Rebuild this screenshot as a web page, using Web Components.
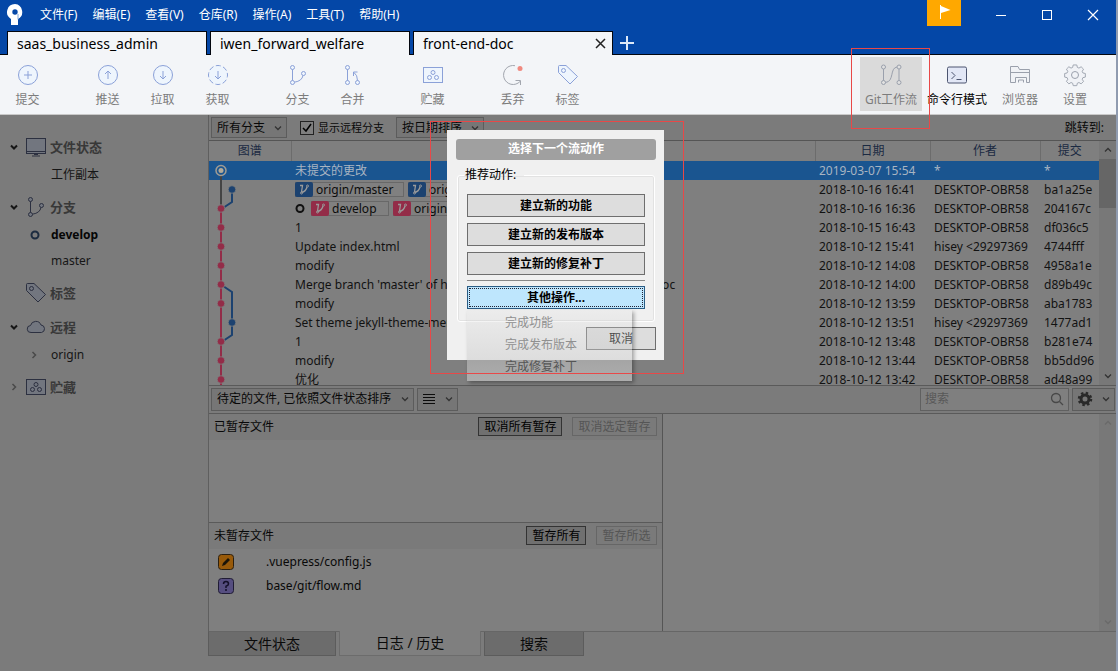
<!DOCTYPE html>
<html lang="zh-CN">
<head>
<meta charset="utf-8">
<title>front-end-doc</title>
<style>
html, body { height: 100%; margin: 0; }
body { font: 12px/16px "Noto Sans", "Noto Sans CJK SC", sans-serif; color: #0c0c0c; background: #7b7b7b; overflow: hidden; }
</style>
</head>
<body>
<app-window></app-window>
<script>
const RESET = `
*, *::before, *::after { box-sizing: border-box; }
button, input, select { font: inherit; color: inherit; margin: 0; padding: 0; border: 0; border-radius: 0; background: none; outline: none; }
button { cursor: pointer; }
svg { display: block; }
`;
function define(name, css, html) {
  const template = document.createElement('template');
  const make = typeof html === 'function' ? html : () => html;
  customElements.define(name, class extends HTMLElement {
    constructor() { super(); this.attachShadow({ mode: 'open' }); }
    connectedCallback() {
      if (this.shadowRoot.childNodes.length) return;
      template.innerHTML = `<style>${RESET}${css}</style>${make(this)}`;
      this.shadowRoot.append(template.content.cloneNode(true));
    }
  });
}

/* Icons */
const STASH = '<rect x="5.5" y="7.5" width="19" height="15"/><circle cx="15" cy="12.5" r="2"/><circle cx="11.5" cy="17.5" r="2"/><circle cx="18.5" cy="17.5" r="2"/>';
const TAG = '<path d="M5.5 6.5q0-1 1-1h6.5l11.5 11-7.5 7.5L5.5 12.5z"/><circle cx="10.5" cy="10.5" r="2"/>';
const BRANCH = '<circle cx="9.5" cy="7.5" r="2"/><circle cx="9.5" cy="22.5" r="2"/><circle cx="20.5" cy="13.5" r="2"/><path d="M9.5 9.5v11M11.5 22.2q7.5-1.2 8.5-6.7" fill="none"/>';
const ICONS = {
  commit: '<circle cx="15" cy="15" r="9.5"/><path d="M15 11v8M11 15h8"/>',
  push: '<circle cx="15" cy="15" r="9.5"/><path d="M15 19v-8M12 14l3-3 3 3" fill="none"/>',
  pull: '<circle cx="15" cy="15" r="9.5"/><path d="M15 11v8M12 16l3 3 3-3" fill="none"/>',
  fetch: '<circle cx="15" cy="15" r="9.5" stroke-dasharray="5 2.46" stroke-dashoffset="2.5"/><path d="M15 11v8M12 16l3 3 3-3" fill="none"/>',
  branch: BRANCH,
  merge: '<circle cx="9.5" cy="7.5" r="2"/><circle cx="9.5" cy="22.5" r="2"/><circle cx="19.5" cy="22.5" r="2"/><path d="M9.5 9.5v11M19.5 20.5Q19.5 15 16 12.5M15.5 16v-4h4" fill="none"/>',
  stash: STASH,
  discard: '<path d="M17 5.7a9.5 9.5 0 1 0 5 15.8M22.5 25v-4.5h-5" fill="none" stroke="#a2a6ae"/><circle cx="22" cy="8.5" r="2.5" fill="#f08a80" stroke="none"/>',
  tag: TAG,
  flow: '<circle cx="7.5" cy="7" r="2"/><circle cx="7.5" cy="22.5" r="2"/><circle cx="23" cy="7" r="2"/><circle cx="23" cy="22.5" r="2"/><path d="M7.5 9v11.5M23 9v11.5M9.500 22.500c9-1 4-14.500 11.500-15.500" fill="none"/>',
  terminal: '<rect x="5.5" y="7" width="19" height="16" rx="1.5"/><path d="M9.500 12l3.500 3.500-3.500 3.500M14.500 19.500h5" fill="none"/>',
  explorer: '<path d="M5.500 22.500v-16h7.500l1.500 3h10v13h-3v-5h-11v5zM5.500 12.500h19M13.500 22.500v-2.500h5v2.500"/>',
  gear: '<path d="M13 5.500h4l.6 2.700 1.800.8 2.400-1.500 2.700 2.700-1.500 2.400.8 1.800 2.700.6v4l-2.700.6-.8 1.800 1.500 2.400-2.700 2.700-2.400-1.500-1.800.8-.6 2.700h-4l-.6-2.700-1.800-.8-2.400 1.500-2.700-2.700 1.500-2.400-.8-1.800-2.700-.6v-4l2.700-.6.8-1.800-1.500-2.400 2.700-2.700 2.400 1.500 1.800-.8z" transform="translate(1.500 0) scale(.9)"/><circle cx="15" cy="15" r="3.500"/>',
  monitor: '<rect x="5.5" y="6.5" width="19" height="15"/><path d="M5.500 19.500h19M11 24h8M13 22.500h4"/>',
  cloud: '<path d="M10 20.500a3.500 3.500 0 0 1-.5-7 5.500 5.500 0 0 1 10.500-.5 3.800 3.800 0 0 1 .5 7.500z"/>'
};
define('ui-icon', `
:host { display: block; width: 30px; height: 30px; flex: none; }
svg { width: 100%; height: 100%; fill: var(--icon-fill, #eef5fd); stroke: var(--icon-stroke, #8ba1d8); stroke-width: 1; }
`, el => `<svg viewBox="0 0 30 30" aria-hidden="true">${ICONS[el.getAttribute('name')]}</svg>`);

define('ui-chevron', `
:host { display: block; width: 10px; height: 10px; flex: none; color: #333; }
svg { fill: none; stroke: currentColor; stroke-width: var(--weight, 1.3); transform: rotate(var(--turn, 0deg)); }
`, '<svg viewBox="0 0 10 10" width="10" height="10" aria-hidden="true"><path d="M2 3.500l3 3 3-3"/></svg>');

/* Title bar */
define('title-bar', `
:host { display: flex; height: 31px; color: #fff; }
.logo { width: 40px; padding: 4px 0 0 6px; }
nav { display: flex; gap: 15px; height: 30px; align-items: center; flex: 1; white-space: nowrap; }
.flag { width: 34px; height: 26px; background: #ffa800; margin-right: 17px; }
.win { width: 46px; height: 30px; display: grid; place-items: center; }
`, `
<svg class="logo" viewBox="0 0 34 26" height="30" aria-hidden="true"><path d="M9 0a8 8 0 0 0-4 14.900V21h7v-6A8 8 0 0 0 9 0z" fill="#fff"/><circle cx="9" cy="8" r="2.700" fill="#0447a7"/><path d="M12 15.500V10" stroke="#7fa4d8" stroke-width="1"/></svg>
<nav>${['文件(F)', '编辑(E)', '查看(V)', '仓库(R)', '操作(A)', '工具(T)', '帮助(H)'].map(t => `<button>${t}</button>`).join('')}</nav>
<button class="flag" aria-label="通知"><svg width="34" height="26" viewBox="0 0 34 26"><path d="M13.500 5v14" stroke="#fff"/><path d="M14 6l9.500 4-9.500 3z" fill="#fff"/></svg></button>
<button class="win" aria-label="最小化"><svg width="12" height="12" stroke="#fff"><path d="M1 6.500h10"/></svg></button>
<button class="win" aria-label="最大化"><svg width="12" height="12" stroke="#fff" fill="none"><rect x="1.500" y="1.500" width="9" height="9"/></svg></button>
<button class="win" aria-label="关闭"><svg width="12" height="12" stroke="#fff" stroke-width="1.200"><path d="M1 1l10 10M11 1L1 11"/></svg></button>
`);

define('repo-tab', `
:host { display: flex; width: 200px; height: 24px; align-items: center; padding: 0 6px 0 9px; background: #f3f5f8; border: 1px solid #02060f; border-bottom: 0; font-size: 14px; line-height: 20px; color: #000; }
.name { flex: 1; text-align: left; }
svg { stroke: #222; stroke-width: 1.500; }
`, el => `<button class="name" role="tab"><slot></slot></button>${el.hasAttribute('active') ? '<button aria-label="关闭标签页"><svg width="11" height="11"><path d="M1 1l9 9M10 1l-9 9"/></svg></button>' : ''}`);
define('repo-tabs', `
:host { display: flex; gap: 3px; padding-left: 7px; height: 24px; border-bottom: 1px solid #02060f; }
[active] { margin-bottom: -1px; }
.add { padding: 0 4px; }
`, `
<repo-tab>saas_business_admin</repo-tab><repo-tab>iwen_forward_welfare</repo-tab><repo-tab active>front-end-doc</repo-tab>
<button class="add" aria-label="新建标签页"><svg width="14" height="14" stroke="#dce8f8" stroke-width="2"><path d="M0 7h14M7 0v14"/></svg></button>
`);

/* Tool bar */
define('tool-button', `
:host { display: block; min-width: 55px; color: #7c7c7c; }
button { display: flex; flex-direction: column; align-items: center; width: 100%; height: 54px; padding-top: 3px; white-space: nowrap; background: var(--face, none); line-height: 20px; }
`, el => `<button><ui-icon name="${el.getAttribute('icon')}"></ui-icon><span><slot></slot></span></button>`);
define('tool-bar', `
:host { display: flex; justify-content: space-between; height: 60px; padding-top: 2px; background: #f3f5f8; border-bottom: 1px solid #c9c9c9; }
.actions, .set { display: flex; }
.actions { gap: 25px; }
.tools { display: grid; grid-template-columns: 62px 70px 56px 54px; padding-right: 14px; }
.tools > * { min-width: 0; --icon-stroke: #9aa0ac; --icon-fill: #f0f2f6; }
.tools > .on { --face: #dadada; --icon-fill: #e0e0e0; }
.tools > .strong { color: #000; --icon-stroke: #4c5570; --icon-fill: #e2e7f6; }
`, `
<div class="actions">
  <div class="set"><tool-button icon="commit">提交</tool-button></div>
  <div class="set"><tool-button icon="push">推送</tool-button><tool-button icon="pull">拉取</tool-button><tool-button icon="fetch">获取</tool-button></div>
  <div class="set"><tool-button icon="branch">分支</tool-button><tool-button icon="merge">合并</tool-button></div>
  <div class="set"><tool-button icon="stash">贮藏</tool-button></div>
  <div class="set"><tool-button icon="discard">丢弃</tool-button><tool-button icon="tag">标签</tool-button></div>
</div>
<div class="tools">
  <tool-button class="on" icon="flow">Git工作流</tool-button><tool-button class="strong" icon="terminal">命令行模式</tool-button><tool-button icon="explorer">浏览器</tool-button><tool-button icon="gear">设置</tool-button>
</div>
`);

/* Side bar */
define('nav-head', `
:host { display: flex; height: 34px; padding: 4px 0 0 9px; align-items: center; color: #383838; font-weight: 700; font-size: 13px; --icon-stroke: #2c3040; --icon-fill: #72767f; }
.mark { width: 12px; }
ui-chevron { color: #161616; --weight: 2; }
:host([closed]) ui-chevron { --turn: -90deg; color: #4a4a4a; --weight: 1.5; }
ui-icon { margin-right: -1px; }
`, el => `<span class="mark">${el.hasAttribute('leaf') ? '' : '<ui-chevron></ui-chevron>'}</span><ui-icon name="${el.getAttribute('icon')}"></ui-icon><span><slot></slot></span>`);
define('nav-item', `
:host { display: flex; height: 26px; align-items: center; padding-left: 29px; color: #161616; }
.mark { width: 22px; }
ui-chevron { --turn: -90deg; color: #4a4a4a; --weight: 1.5; }
:host([current]) { font-weight: 700; color: #060606; }
a { color: inherit; text-decoration: none; }
`, el => `<span class="mark">${el.hasAttribute('current') ? '<svg width="12" height="12" fill="none" stroke="#1c2c40" stroke-width="2"><circle cx="6" cy="6" r="3.500"/></svg>' : el.hasAttribute('closed') ? '<ui-chevron></ui-chevron>' : ''}</span><a href="#"><slot></slot></a>`);
define('side-bar', `
:host { display: block; width: 208px; flex: none; padding-top: 13px; background: #7b7b7b; }
`, `
<nav-head icon="monitor">文件状态</nav-head><nav-item>工作副本</nav-item>
<nav-head icon="branch">分支</nav-head><nav-item current>develop</nav-item><nav-item>master</nav-item>
<nav-head icon="tag" leaf>标签</nav-head>
<nav-head icon="cloud">远程</nav-head><nav-item closed>origin</nav-item>
<nav-head icon="stash" closed>贮藏</nav-head>
`);

/* Controls */
define('drop-down', `
:host { display: grid; align-items: center; height: 21px; border: 1px solid #5c5c5c; background: #767676; color: #080808; }
select, ui-chevron { grid-area: 1 / 1; }
select { appearance: none; width: 100%; height: 100%; padding-left: 5px; }
ui-chevron { justify-self: end; margin-right: 3px; pointer-events: none; }
`, el => `<select aria-label="${el.getAttribute('label')}"><option>${el.getAttribute('value')}</option></select><ui-chevron></ui-chevron>`);
define('filter-bar', `
:host { display: flex; align-items: center; height: 25px; padding: 0 12px 0 2px; background: #7b7b7b; color: #080808; }
.branches { width: 76px; margin-right: 13px; }
.order { width: 88px; margin-left: 12px; }
label { display: flex; align-items: center; font-size: 11px; }
input { appearance: none; width: 14px; height: 14px; margin-right: 4px; border: 1px solid #222; background: #7f7f7f url('data:image/svg+xml,<svg xmlns="http://www.w3.org/2000/svg" viewBox="0 0 12 12"><path d="M2 6l3 3 5-7" fill="none" stroke="black" stroke-width="1.500"/></svg>'); }
.jump { margin-left: auto; }
`, `
<drop-down class="branches" label="分支" value="所有分支"></drop-down>
<label><input type="checkbox" checked>显示远程分支</label>
<drop-down class="order" label="排序" value="按日期排序"></drop-down>
<span class="jump">跳转到:</span>
`);

/* Commit log */
const RED = '#932c48', BLUE = '#1c4270';
const line = (d, c) => `<path d="${d}" stroke="${c}" stroke-width="2" fill="none"/>`;
const dot = (x, c) => `<circle cx="${x}" cy="9.5" r="3.8" fill="${c}" stroke="#7f7f7f" stroke-width=".8"/>`;
const GRAPH = {
  head: line('M12 9v10', '#444') + '<circle cx="12" cy="9.500" r="5" fill="#1a5590" stroke="#a09c94" stroke-width="1.500"/><circle cx="12" cy="9.500" r="2.500" fill="#b4aa98"/>',
  side: line('M12 0v19', '#444') + line('M23 9v10', BLUE) + dot(23, BLUE),
  join: line('M12 0v9', '#444') + line('M12 9v10', RED) + line('M23 0v3l-9 6', BLUE) + dot(12, RED),
  plain: line('M12 0v19', RED) + dot(12, RED),
  fork: line('M12 0v19', RED) + line('M14 11l9 6v2', BLUE) + dot(12, RED),
  both: line('M12 0v19', RED) + line('M23 0v19', BLUE) + dot(12, RED),
  second: line('M12 0v19', RED) + line('M23 0v19', BLUE) + dot(23, BLUE),
  close: line('M12 0v19', RED) + line('M23 0v3l-9 6', BLUE) + dot(12, RED)
};
define('ref-badge', `
:host { display: inline-flex; align-items: center; flex: none; width: var(--w); height: 15px; border: 1px solid #686868; background: #808080; color: #0c0c0c; line-height: 13px; }
svg { margin: -1px 3px -1px -1px; background: var(--tint); border-radius: 2px; }
`, '<svg width="18" height="15" fill="none" stroke="#9a9a9a" aria-hidden="true"><path d="M5 3.500h2.500L6.500 10M6.500 10.500q4.500-1 5.500-5.500" stroke-width="1.300"/><circle cx="6.500" cy="11" r="1"/><circle cx="12.500" cy="4" r="1"/></svg><span><slot></slot></span>');
const D = 'DESKTOP-OBR58';
const COMMITS = [
  ['head', '未提交的更改', '2019-03-07 15:54', '*', '*'],
  ['side', `<ref-badge style="--w:109px;--tint:${BLUE}">origin/master</ref-badge><ref-badge style="--w:100px;--tint:${BLUE}">origin/HEAD</ref-badge>`, '2018-10-16 16:41', D, 'ba1a25e'],
  ['join', `<svg class="here" width="11" height="11" fill="none" stroke="#111" stroke-width="2"><circle cx="5" cy="5.500" r="3.500"/></svg><ref-badge style="--w:78px;--tint:${RED}">develop</ref-badge><ref-badge style="--w:109px;--tint:${RED}">origin/develop</ref-badge>`, '2018-10-16 16:36', D, '204167c'],
  ['plain', '1', '2018-10-15 16:43', D, 'df036c5'],
  ['plain', 'Update index.html', '2018-10-12 15:41', 'hisey &lt;29297369', '4744fff'],
  ['plain', 'modify', '2018-10-12 14:08', D, '4958a1e'],
  ['fork', "Merge branch 'master' of https://github.com/hisey29/front-end-doc", '2018-10-12 14:00', D, 'd89b49c'],
  ['both', 'modify', '2018-10-12 13:59', D, 'aba1783'],
  ['second', 'Set theme jekyll-theme-merlot', '2018-10-12 13:51', 'hisey &lt;29297369', '1477ad1'],
  ['close', '1', '2018-10-12 13:48', D, 'b281e74'],
  ['plain', 'modify', '2018-10-12 13:44', D, 'bb5dd96'],
  ['plain', '优化', '2018-10-12 13:42', D, 'ad48a99']
];
define('scroll-track', `
:host { display: flex; flex-direction: column; align-items: center; width: 17px; flex: none; padding: 4px 0; background: #787878; }
.thumb { width: 17px; height: 49px; margin-top: 4px; background: #666; }
.up { --turn: 180deg; }
.down { margin-top: auto; }
:host([idle]) ui-chevron { color: #6a6a6a; }
`, el => `<ui-chevron class="up"></ui-chevron>${el.hasAttribute('idle') ? '' : '<div class="thumb"></div>'}<ui-chevron class="down"></ui-chevron>`);
define('commit-log', `
:host { display: flex; min-height: 0; overflow: hidden; border-top: 1px solid #555; background: #7f7f7f; }
.view { flex: 1; min-width: 0; overflow: hidden; }
table { width: 100%; border-collapse: collapse; table-layout: fixed; color: #121212; }
th { height: 20px; padding: 0; font-weight: 400; color: #1b2a42; border-right: 1px solid #6c6c6c; }
th:last-child { border-right: 0; }
td { height: 19px; padding: 0 4px; line-height: 19px; }
td:first-child { padding: 0; }
td > div { display: flex; align-items: center; gap: 4px; height: 19px; overflow: hidden; white-space: nowrap; }
.selected { background: #1a5590; color: #a8b4c2; }
.here { flex: none; margin-right: 1px; }
`, `
<div class="view"><table>
<colgroup><col style="width:82px"><col><col style="width:115px"><col style="width:110px"><col style="width:59px"></colgroup>
<thead><tr><th>图谱</th><th aria-label="描述"></th><th>日期</th><th>作者</th><th>提交</th></tr></thead>
<tbody>${COMMITS.map(([g, ...cells], i) => `<tr${i ? '' : ' class="selected"'}><td><svg width="40" height="19">${GRAPH[g]}</svg></td>${cells.map(c => `<td><div>${c}</div></td>`).join('')}</tr>`).join('')}</tbody>
</table></div><scroll-track></scroll-track>
`);

/* Working-copy panes */
define('pending-bar', `
:host { display: flex; align-items: center; gap: 3px; height: 29px; padding: 0 1px 0 2px; background: #7b7b7b; border: solid #5a5a5a; border-width: 1px 0; }
drop-down { height: 23px; }
.files { width: 203px; }
.list, .gear { display: flex; align-items: center; justify-content: space-between; height: 23px; border: 1px solid #5c5c5c; background: #767676; }
.list { width: 41px; padding: 0 3px 0 5px; }
.gear { width: 43px; padding: 0 3px 0 4px; }
.search { display: flex; align-items: center; width: 149px; height: 23px; margin-left: auto; padding: 0 4px; border: 1px solid #606060; background: #7f7f7f; }
input { flex: 1; min-width: 0; }
input::placeholder { color: #585858; opacity: 1; }
`, `
<drop-down class="files" label="文件排序" value="待定的文件, 已依照文件状态排序"></drop-down>
<button class="list" aria-label="列表视图"><svg width="12" height="12" stroke="#0c0c0c"><path d="M0 1.500h12M0 4.500h12M0 7.500h12M0 10.500h12"/></svg><ui-chevron></ui-chevron></button>
<label class="search"><input type="search" aria-label="搜索" placeholder="搜索"><svg width="14" height="14" fill="none" stroke="#484848" stroke-width="1.300"><circle cx="6" cy="6" r="4.500"/><path d="M9.500 9.500L13 13"/></svg></label>
<button class="gear" aria-label="选项"><svg width="16" height="16" viewBox="0 0 16 16"><circle cx="8" cy="8" r="4" fill="none" stroke="#2a2a2a" stroke-width="3"/><circle cx="8" cy="8" r="6" fill="none" stroke="#2a2a2a" stroke-width="2.500" stroke-dasharray="2.400 2.312"/></svg><ui-chevron></ui-chevron></button>
`);
define('stage-pane', `
:host { display: flex; flex-direction: column; flex: 1; min-height: 0; background: #7f7f7f; }
header { display: flex; align-items: center; gap: 10px; height: 26px; padding: 0 5px; background: #7a7a7a; color: #080808; }
h2 { flex: 1; margin: 0; font: inherit; }
button { height: 19px; padding: 0 5px; line-height: 16px; border: 1px solid #333; background: #707070; color: #000; }
button:disabled { border-color: #666; background: #7a7a7a; color: #555; }
`, el => `<header><h2>${el.getAttribute('heading')}</h2><button>${el.getAttribute('all')}</button><button disabled>${el.getAttribute('some')}</button></header><slot></slot>`);
define('file-row', `
:host { display: flex; align-items: center; height: 24px; padding-left: 9px; color: #080808; }
svg { margin-right: 32px; }
`, el => `<svg width="16" height="16" viewBox="0 0 16 16" aria-hidden="true">${el.getAttribute('kind') === 'edit'
  ? '<rect x=".5" y=".5" width="15" height="15" rx="3" fill="#985a0a" stroke="#2c2010"/><path d="M4 12l1-3 5-5 2 2-5 5z" fill="#1a1408"/>'
  : '<rect x=".5" y=".5" width="15" height="15" rx="3" fill="#564e80" stroke="#201c34"/><path d="M5.500 6q0-2.500 2.500-2.500T10.500 6Q10.500 7.500 8 8.200V10" fill="none" stroke="#14102a" stroke-width="1.500"/><circle cx="8" cy="12" r="1" fill="#14102a"/>'}</svg><slot></slot>`);
define('work-area', `
:host { display: flex; min-height: 0; border-bottom: 1px solid #666; }
.files { display: flex; flex-direction: column; width: 50%; border-right: 1px solid #555; }
stage-pane + stage-pane { border-top: 1px solid #5a5a5a; }
.rows { padding-top: 1px; }
.diff { display: flex; flex: 1; justify-content: flex-end; background: #7f7f7f; }
`, `
<div class="files">
<stage-pane heading="已暂存文件" all="取消所有暂存" some="取消选定暂存"></stage-pane>
<stage-pane heading="未暂存文件" all="暂存所有" some="暂存所选"><div class="rows"><file-row kind="edit">.vuepress/config.js</file-row><file-row kind="new">base/git/flow.md</file-row></div></stage-pane>
</div>
<div class="diff"><scroll-track idle></scroll-track></div>
`);
define('view-tabs', `
:host { display: flex; gap: 3px; height: 39px; align-items: flex-start; background: #7b7b7b; font-size: 14px; color: #0a0a0a; }
button { height: 24px; border: 1px solid #5c5c5c; border-top: 0; background: #6c6c6c; }
.on { background: #7f7f7f; border-color: #6c6c6c; margin-top: -1px; height: 25px; }
`, `<button style="width:128px">文件状态</button><button class="on" style="width:142px">日志 / 历史</button><button style="width:100px">搜索</button>`);

/* Flow dialog with its open menu */
define('flow-dialog', `
:host { display: block; width: 217px; height: 230px; padding: 9px 8px 9px 9px; background: #f0f0f0; color: #000; }
h1 { margin: 0 0 7px; height: 21px; border-radius: 3px; background: #a0a0a0; color: #fff; font: inherit; font-weight: 700; line-height: 20px; text-align: center; }
fieldset { display: flex; flex-direction: column; gap: 6px; margin: 0 1px 5px; padding: 19px 9px 12px; border: 1px solid #fff; border-radius: 3px; box-shadow: inset 0 0 0 1px #e2e2e2; }
legend { margin-left: -3px; padding: 0 8px 0 1px; height: 16px; margin-bottom: -8px; }
hr { width: 100%; margin: -1px 0; border: 0; border-top: 1px solid #888; }
button { height: 23px; line-height: 20px; border: 1px solid #6e6e6e; background: #ddd; font-weight: 700; color: #000; }
.focus { border: 1px solid #2a5c84; background: #bee6fd; outline: 1px dotted #223; outline-offset: -3px; }
.cancel { display: block; width: 70px; margin-left: auto; font-weight: 400; }
`, `
<h1>选择下一个流动作</h1>
<fieldset><legend>推荐动作:</legend><button>建立新的功能</button><button>建立新的发布版本</button><button>建立新的修复补丁</button><hr><button class="focus">其他操作...</button></fieldset>
<button class="cancel">取消</button>
`);
define('fade-menu', `
:host { display: block; width: 165px; height: 71px; padding-top: 2px; background: linear-gradient(#dcdcdc33, #c8c8c8a0); box-shadow: 2px 2px 4px #0005; color: #909090; }
button { display: block; width: 100%; height: 22px; padding-left: 38px; text-align: left; }
.last { color: #555; }
`, '<button>完成功能</button><button>完成发布版本</button><button class="last">完成修复补丁</button>');

define('app-window', `
:host { display: flex; flex-direction: column; position: relative; height: 100%; border-right: 2px solid #8f9bb0; }
.top { background: #0447a7; }
.body { display: flex; flex: 1; min-height: 0; }
main { display: flex; flex-direction: column; flex: 1; min-width: 0; }
.content { display: flex; flex-direction: column; flex: 1; min-height: 0; border-left: 1px solid #5f5f5f; }
commit-log { flex: 245 1 0; }
work-area { flex: 218 1 0; }
flow-dialog, fade-menu, .ring { position: absolute; }
flow-dialog { left: calc(50% - 111px); top: 130px; }
fade-menu { left: calc(50% - 91px); top: 310px; }
.ring { border: 1px solid #e84848; pointer-events: none; }
.ring.one { left: calc(50% - 128px); top: 121px; width: 254px; height: 253px; }
.ring.two { right: 186px; top: 48px; width: 79px; height: 81px; }
`, `
<div class="top"><title-bar></title-bar><repo-tabs></repo-tabs></div>
<tool-bar></tool-bar>
<div class="body"><side-bar></side-bar>
<main><div class="content"><filter-bar></filter-bar><commit-log></commit-log><pending-bar></pending-bar><work-area></work-area></div><view-tabs></view-tabs></main></div>
<flow-dialog></flow-dialog><fade-menu></fade-menu><div class="ring one"></div><div class="ring two"></div>
`);
</script>
</body>
</html>
